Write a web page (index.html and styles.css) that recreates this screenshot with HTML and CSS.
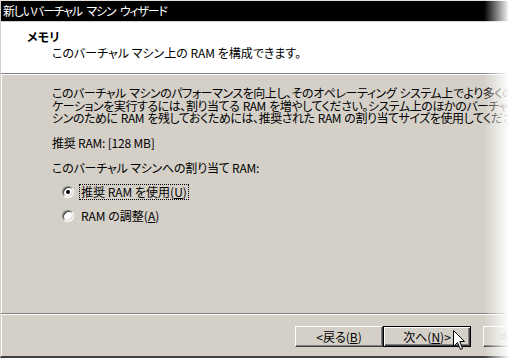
FILE: index.html
```html
<!DOCTYPE html>
<html lang="ja">
<head>
    <meta charset="UTF-8">
    <meta name="viewport" content="width=device-width, initial-scale=1.0">
    <title>新しいバーチャル マシン ウィザード</title>
    <link rel="stylesheet" href="styles.css">
</head>
<body>
    <div class="window">
        <div class="titlebar">新しいバーチャル マシン ウィザード</div>
        <div class="header">
            <div class="header-title">メモリ</div>
            <div class="header-sub">このバーチャル マシン上の RAM を構成できます。</div>
        </div>
        <div class="content">
            <p class="desc">このバーチャル マシンのパフォーマンスを向上し、そのオペレーティング システム上でより多くのアプリ<br>ケーションを実行するには、割り当てる RAM を増やしてください。システム上のほかのバーチャル マ<br>シンのために RAM を残しておくためには、推奨された RAM の割り当てサイズを使用してください。</p>
            <p class="line">推奨 RAM: [128 MB]</p>
            <p class="line">このバーチャル マシンへの割り当て RAM:</p>
            <div class="options">
                <label class="option">
                    <span class="radio checked"></span>
                    <span class="option-label focus">推奨 RAM を使用(<u>U</u>)</span>
                </label>
                <label class="option">
                    <span class="radio"></span>
                    <span class="option-label">RAM の調整(<u>A</u>)</span>
                </label>
            </div>
        </div>
        <div class="footer">
            <button class="btn">&lt;戻る(<u>B</u>)</button>
            <button class="btn btn-default">次へ(<u>N</u>)&gt;</button>
            <button class="btn btn-cancel">キャンセル</button>
        </div>
    </div>

    <div class="fade"></div>

    <svg class="cursor" width="13" height="21" viewBox="0 0 13 21">
        <path d="M0.5 0.5 L0.5 16.5 L4.5 12.5 L7.5 19.5 L9.5 18.5 L6.8 11.5 L11.5 11.5 Z" fill="#fff" stroke="#000" stroke-width="1"/>
    </svg>
</body>
</html>
```

FILE: styles.css
```css
html, body {
    margin: 0;
    overflow: hidden;
    background-color: #fff;
}
body {
    font-family: "Noto Sans CJK JP", sans-serif;
    font-size: 12px;
    font-feature-settings: "palt";
    color: #000;
    position: relative;
    width: 508px;
    height: 358px;
}
.window {
    width: 640px;
    height: 358px;
    box-sizing: border-box;
    border-top: 1px solid #e4e0d8;
    border-left: 1px solid #d4d0c8;
    border-bottom: 2px solid #404040;
    display: flex;
    flex-direction: column;
    background-color: #d4d0c8;
}
.titlebar {
    height: 20px;
    line-height: 20px;
    background-color: #000;
    color: #fff;
    padding-left: 2px;
    letter-spacing: -1.2px;
    word-spacing: 3px;
    border-bottom: 1px solid #d4d0c8;
    white-space: nowrap;
}
.header {
    height: 52px;
    box-sizing: border-box;
    background-color: #fff;
    padding: 7px 0 0 26px;
    border-bottom: 1px solid #808080;
    box-shadow: 0 1px 0 #fff;
    margin-bottom: 1px;
}
.header-title {
    font-weight: bold;
    line-height: 16px;
}
.header-sub {
    line-height: 16px;
    padding-left: 25px;
    white-space: nowrap;
}
.content {
    flex: 1;
    padding: 12px 0 0 51px;
    box-shadow: inset 1px 0 0 #fff;
    border-bottom: 1px solid #808080;
    white-space: nowrap;
}
.desc {
    margin: 0;
    line-height: 12.5px;
    letter-spacing: -0.45px;
    word-spacing: 1px;
}
.line {
    margin: 12.5px 0 0;
    line-height: 12.5px;
    letter-spacing: -0.2px;
}
.options {
    margin: 9px 0 0 10px;
    display: flex;
    flex-direction: column;
    gap: 8px;
}
.option {
    display: flex;
    align-items: center;
    height: 16px;
}
.radio {
    width: 12px;
    height: 12px;
    box-sizing: border-box;
    border-radius: 50%;
    background-color: #fff;
    border: 1px solid;
    border-color: #808080 #fff #fff #808080;
    box-shadow: inset 1px 1px 0 #404040, inset -1px -1px 0 #d4d0c8;
    position: relative;
    margin-right: 5px;
}
.radio.checked::after {
    content: "";
    position: absolute;
    left: 3px;
    top: 3px;
    width: 4px;
    height: 4px;
    border-radius: 50%;
    background-color: #000;
}
.option-label {
    line-height: 14px;
    padding: 0 1px;
    border: 1px solid transparent;
}
.option-label.focus {
    border: 1px dotted #000;
}
.footer {
    height: 42px;
    box-sizing: border-box;
    border-top: 1px solid #fff;
    padding: 11px 0 0 294px;
    display: flex;
    align-items: flex-start;
    box-shadow: inset 1px 0 0 #fff;
}
.btn {
    width: 88px;
    height: 21px;
    padding: 0;
    font-family: inherit;
    font-size: 12px;
    font-feature-settings: "palt";
    color: #000;
    background-color: #d4d0c8;
    border: 1px solid;
    border-color: #fff #404040 #404040 #fff;
    box-shadow: inset -1px -1px 0 #808080;
    line-height: 17px;
}
.btn-default {
    border: 1px solid #000;
    box-shadow: inset 1px 1px 0 #fff, inset -1px -1px 0 #404040, inset -2px -2px 0 #808080;
}
.btn-cancel {
    margin-left: 12px;
    color: #808080;
}
.fade {
    position: absolute;
    top: 0;
    right: 0;
    width: 24px;
    height: 358px;
    background: linear-gradient(to right, rgba(255, 255, 255, 0), rgba(255, 255, 255, 0.95));
}
.cursor {
    position: absolute;
    left: 453px;
    top: 330px;
}
```
